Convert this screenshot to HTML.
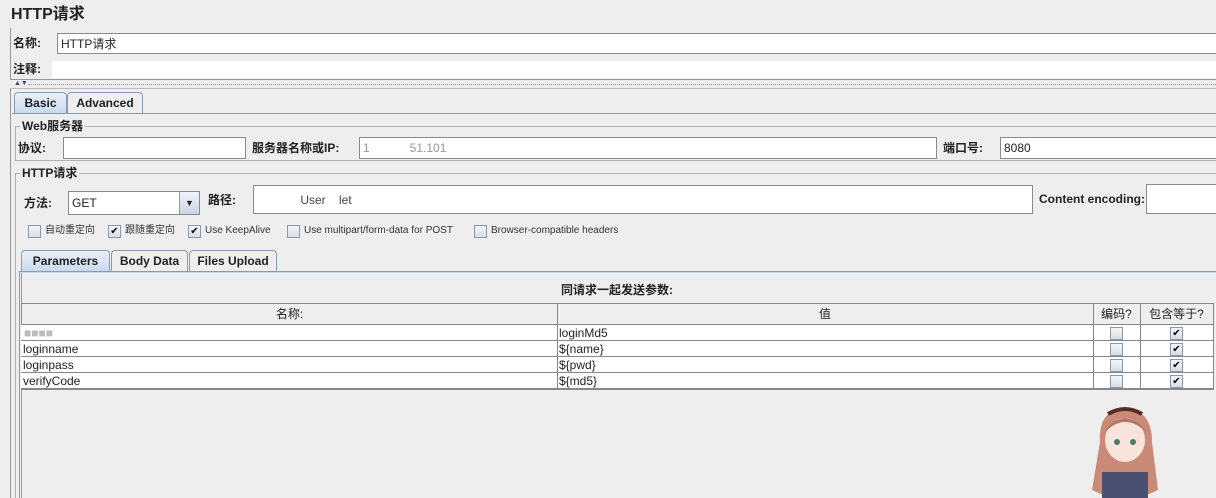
<!DOCTYPE html>
<html><head><meta charset="utf-8"><style>
*{margin:0;padding:0;box-sizing:border-box}
body{width:1216px;height:498px;background:#eeeeee;position:relative;overflow:hidden;font-family:"Liberation Sans","Noto Sans CJK SC",sans-serif;font-size:12px;line-height:14px;color:#222}
.a{position:absolute}
.f{position:absolute;background:#fff;border:1px solid #8a8a8a;border-right:none;padding-left:3px;display:flex;align-items:center}
.b{font-weight:bold}
.cb{position:absolute;width:13px;height:13px;border:1px solid #8c98a8;background:linear-gradient(#f4f6f9,#d8dde5);font-size:10px;line-height:11px;text-align:center;color:#000}
.tab{position:absolute;border:1px solid #8a9bb0;border-bottom:none;border-radius:4px 4px 0 0;background:#eeeeee;font-weight:bold;text-align:center}
.sel{background:linear-gradient(#eaf1f9,#c7d9ee)}
.lbl{position:absolute;font-size:10px;line-height:14px;color:#333}
.row{position:absolute;left:21px;width:1192px;height:16px;background:#fff;border-bottom:1px solid #888}
.row span{position:absolute;top:0;font-size:12px;line-height:16px}
</style></head><body>
<div class="a b" style="left:11px;top:6px;font-size:16px;line-height:18px">HTTP请求</div>
<div class="a" style="left:10px;top:28px;width:1206px;height:52px;border-left:1px solid #999;border-bottom:1px solid #999"></div>
<div class="a b" style="left:13px;top:36px">名称:</div>
<div class="f" style="left:57px;top:33px;width:1159px;height:21px">HTTP请求</div>
<div class="a b" style="left:13px;top:62px">注释:</div>
<div class="a" style="left:52px;top:61px;width:1164px;height:17px;background:#fff"></div>
<div class="a" style="left:14px;top:80px;font-size:7px;line-height:8px;color:#446">▲▼</div>
<div class="a" style="left:28px;top:84px;width:1188px;border-top:1px dotted #999"></div>
<div class="a" style="left:10px;top:88px;width:1206px;height:410px;border-left:1px solid #999;border-top:1px solid #bbb"></div>
<div class="tab sel" style="left:14px;top:92px;width:53px;height:22px;line-height:20px">Basic</div>
<div class="tab" style="left:67px;top:92px;width:76px;height:21px;line-height:20px">Advanced</div>
<div class="a" style="left:12px;top:113px;width:1204px;border-top:1px solid #8a9bb0"></div>
<div class="a" style="left:15px;top:126px;width:1201px;height:35px;border:1px solid #b0b0b0;border-right:none"></div>
<div class="a b" style="left:20px;top:119px;background:#eee;padding:0 2px">Web服务器</div>
<div class="a b" style="left:18px;top:141px">协议:</div>
<div class="f" style="left:63px;top:137px;width:183px;height:22px;border-right:1px solid #8a8a8a"></div>
<div class="a b" style="left:252px;top:141px">服务器名称或IP:</div>
<div class="f" style="left:359px;top:137px;width:578px;height:22px;border-right:1px solid #8a8a8a;color:#999">1&nbsp;&nbsp;&nbsp;&nbsp;&nbsp;&nbsp;&nbsp;&nbsp;&nbsp;&nbsp;&nbsp;&nbsp;51.101</div>
<div class="a b" style="left:943px;top:141px">端口号:</div>
<div class="f" style="left:1000px;top:137px;width:216px;height:22px">8080</div>
<div class="a" style="left:15px;top:173px;width:1201px;height:325px;border-left:1px solid #b0b0b0;border-top:1px solid #b0b0b0"></div>
<div class="a b" style="left:20px;top:166px;background:#eee;padding:0 2px">HTTP请求</div>
<div class="a b" style="left:24px;top:196px">方法:</div>
<div class="f" style="left:68px;top:191px;width:132px;height:24px;border-right:1px solid #8a8a8a">GET</div>
<div class="a" style="left:179px;top:192px;width:20px;height:22px;border-left:1px solid #8a9bb0;background:linear-gradient(#f0f4f9,#c9d6e6);text-align:center;font-size:9px;line-height:22px">▼</div>
<div class="a b" style="left:208px;top:193px">路径:</div>
<div class="f" style="left:253px;top:185px;width:780px;height:29px;border-right:1px solid #8a8a8a;color:#444">&nbsp;&nbsp;&nbsp;&nbsp;&nbsp;&nbsp;&nbsp;&nbsp;&nbsp;&nbsp;&nbsp;&nbsp;&nbsp;User&nbsp;&nbsp;&nbsp;&nbsp;let</div>
<div class="a b" style="left:1039px;top:192px">Content encoding:</div>
<div class="f" style="left:1146px;top:184px;width:70px;height:30px"></div>
<div class="cb" style="left:28px;top:225px"></div><div class="lbl" style="left:45px;top:224px">自动重定向</div>
<div class="cb" style="left:108px;top:225px">✔</div><div class="lbl" style="left:125px;top:224px">跟随重定向</div>
<div class="cb" style="left:188px;top:225px">✔</div><div class="lbl" style="left:205px;top:224px">Use KeepAlive</div>
<div class="cb" style="left:287px;top:225px"></div><div class="lbl" style="left:304px;top:224px">Use multipart/form-data for POST</div>
<div class="cb" style="left:474px;top:225px"></div><div class="lbl" style="left:491px;top:224px">Browser-compatible headers</div>
<div class="tab sel" style="left:21px;top:250px;width:89px;height:22px;line-height:20px">Parameters</div>
<div class="tab" style="left:111px;top:250px;width:77px;height:21px;line-height:20px">Body Data</div>
<div class="tab" style="left:189px;top:250px;width:88px;height:21px;line-height:20px">Files Upload</div>
<div class="a" style="left:19px;top:271px;width:1197px;height:227px;border-left:1px solid #8a9bb0;border-top:1px solid #8a9bb0;box-shadow:inset 0 1px 0 #c7d9ee"></div>
<div class="a" style="left:21px;top:273px;width:1195px;height:225px;border-left:1px solid #999"></div>
<div class="a b" style="left:0;width:1234px;text-align:center;top:283px">同请求一起发送参数:</div>
<div class="a" style="left:21px;top:303px;width:1193px;height:87px;border:1px solid #888"></div>
<div class="a" style="left:22px;top:304px;width:1191px;height:21px;background:#eee;border-bottom:1px solid #888"></div>
<div class="a" style="left:22px;top:307px;width:535px;text-align:center">名称:</div>
<div class="a" style="left:557px;top:307px;width:536px;text-align:center">值</div>
<div class="a" style="left:1093px;top:307px;width:47px;text-align:center">编码?</div>
<div class="a" style="left:1140px;top:307px;width:73px;text-align:center">包含等于?</div>
<div class="row" style="top:325px"><span style="left:3px;color:#bbb">■■■■</span><span style="left:538px">loginMd5</span></div>
<div class="row" style="top:341px"><span style="left:2px">loginname</span><span style="left:538px">${name}</span></div>
<div class="row" style="top:357px"><span style="left:2px">loginpass</span><span style="left:538px">${pwd}</span></div>
<div class="row" style="top:373px"><span style="left:2px">verifyCode</span><span style="left:538px">${md5}</span></div>
<div class="a" style="left:557px;top:304px;height:86px;border-left:1px solid #888"></div>
<div class="a" style="left:1093px;top:304px;height:86px;border-left:1px solid #888"></div>
<div class="a" style="left:1140px;top:304px;height:86px;border-left:1px solid #888"></div>
<div class="cb" style="left:1110px;top:327px"></div><div class="cb" style="left:1170px;top:327px">✔</div>
<div class="cb" style="left:1110px;top:343px"></div><div class="cb" style="left:1170px;top:343px">✔</div>
<div class="cb" style="left:1110px;top:359px"></div><div class="cb" style="left:1170px;top:359px">✔</div>
<div class="cb" style="left:1110px;top:375px"></div><div class="cb" style="left:1170px;top:375px">✔</div>
<svg class="a" style="left:1080px;top:402px" width="90" height="96">
<path d="M20 40 Q18 8 45 6 Q72 8 72 40 L78 88 L60 96 L30 96 L12 88 Z" fill="#c98a78"/>
<ellipse cx="45" cy="38" rx="20" ry="22" fill="#f8e4da"/>
<path d="M25 30 Q45 10 66 30 Q60 18 45 16 Q30 18 25 30Z" fill="#b87666"/>
<path d="M28 12 Q45 2 62 12" stroke="#5a2a2a" stroke-width="4" fill="none"/>
<circle cx="37" cy="40" r="3" fill="#4a7a6a"/><circle cx="53" cy="40" r="3" fill="#4a7a6a"/>
<rect x="22" y="70" width="46" height="26" fill="#4a5072"/>
</svg>
</body></html>
